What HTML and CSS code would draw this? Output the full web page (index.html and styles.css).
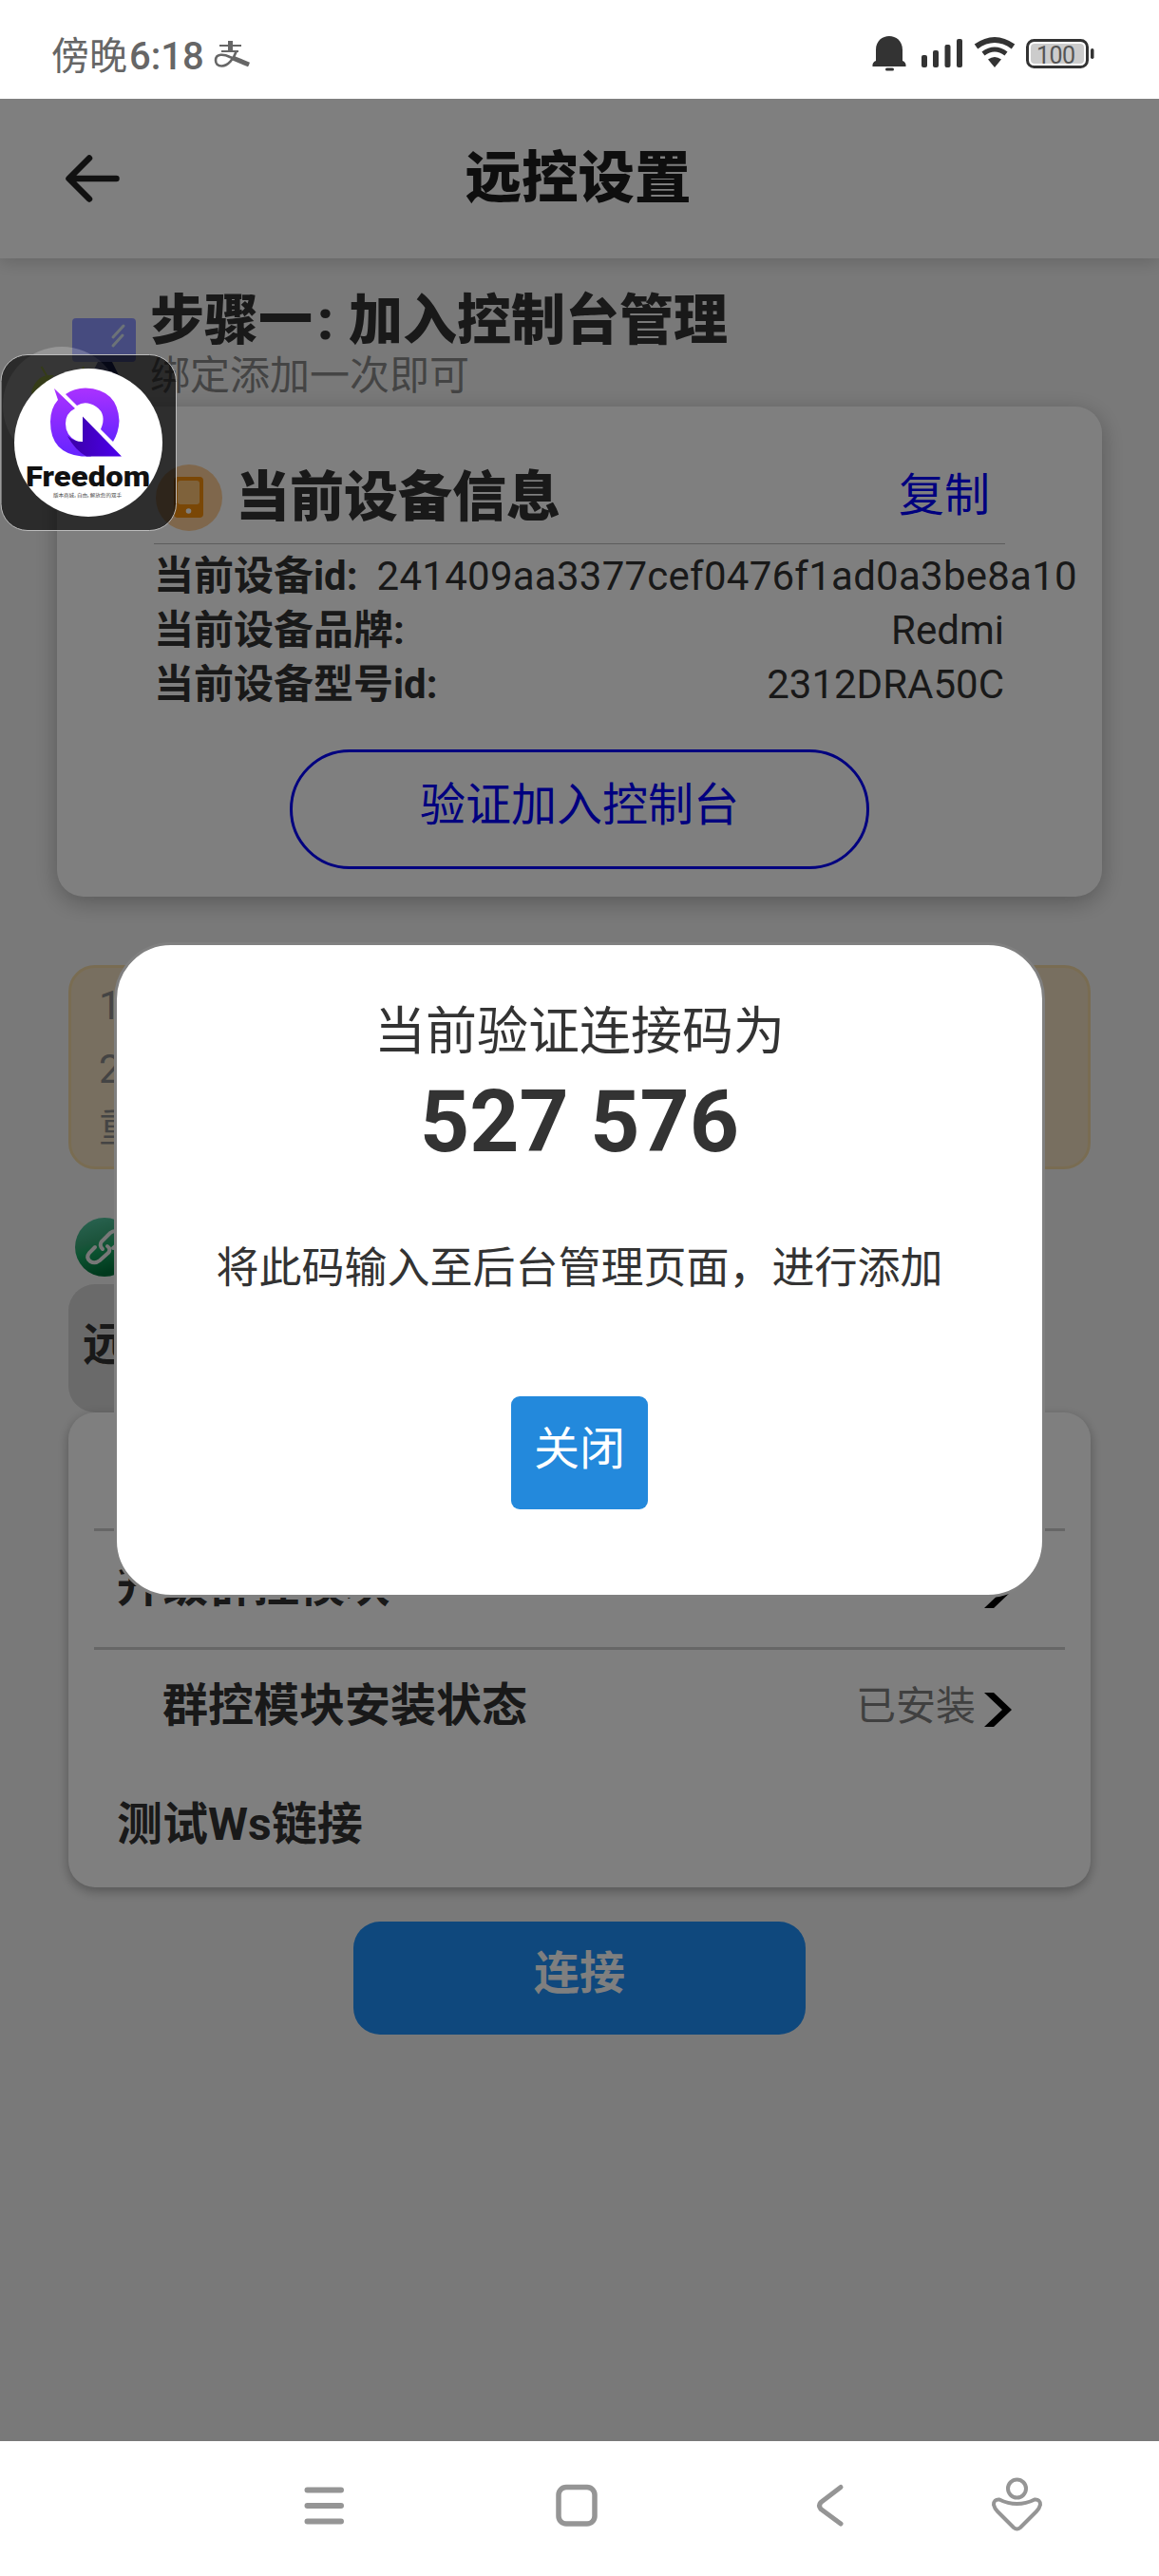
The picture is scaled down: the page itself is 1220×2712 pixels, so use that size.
FILE: index.html
```html
<!DOCTYPE html>
<html lang="zh-CN">
<head>
<meta charset="utf-8">
<title>远控设置</title>
<link rel="stylesheet" href="styles.css">
</head>
<body>
<div class="screen">
  <div class="status">
    <span class="clock">傍晚<b>6:18</b></span>
    <svg class="pay" width="38" height="30" viewBox="0 0 38 30" fill="none" stroke="#666"><path d="M6 6H29M8 12H26" stroke-width="2"/><path d="M17.500 1V12" stroke-width="5"/><path d="M24 11.500C21 20 15 27.500 8.500 27.500C4 27.500 2 25 2 21.500C2 14 11 15 17 18L37 26" stroke-width="2.600"/><path d="M20 19L37 26" stroke-width="5"/></svg>
    <svg class="indicators" width="236" height="40" viewBox="0 0 236 40">
      <g fill="#333"><path d="M4 27V15.500C4 -3.800 32 -3.800 32 15.500V27Q36 28.500 35.500 33H.5Q0 28.500 4 27Z"/><rect x="14" y="34.500" width="9" height="3" rx="1.500"/>
      <rect x="52" y="21" width="6" height="13" rx="2"/><rect x="64" y="16" width="6" height="18" rx="2"/><rect x="76.500" y="10" width="6" height="24" rx="2"/><rect x="89" y="4" width="6" height="30" rx="2"/>
      <path d="M122 25.500Q129 20.500 136 25.500L129 34Z"/></g>
      <path d="M109.500 12Q129 -2 148.500 12" fill="none" stroke="#333" stroke-width="6"/><path d="M117 19.500Q129 10.500 141 19.500" fill="none" stroke="#333" stroke-width="5"/>
      <rect x="163.500" y="5.500" width="63" height="28" rx="7" fill="#fff" stroke="#333" stroke-width="3"/><rect x="167" y="9" width="56" height="21" rx="4" fill="#ccc"/><rect x="230" y="14" width="3.500" height="11" rx="1.700" fill="#333"/>
      <text x="193.500" y="29.500" text-anchor="middle" class="battery" textLength="41">100</text>
    </svg>
  </div>
  <div class="app">
    <div class="header">
      <svg class="back" width="58" height="58" viewBox="0 0 58 58" fill="none" stroke="#222" stroke-width="6.500" stroke-linecap="round" stroke-linejoin="round"><path d="M53.500 29H4M25 7.500L3.500 29L25 50.500"/></svg>
      <h1>远控设置</h1>
    </div>
    <div class="step">
      <svg class="monitor" width="67" height="62" viewBox="0 0 67 62"><rect width="67" height="46" rx="4" fill="#8d96ff"/><path d="M27 46H42L49 60H20Z" fill="#26307c"/><path d="M43 20L54 8M43 29L53 18" stroke="#d9e6ef" stroke-width="3" stroke-linecap="round"/></svg>
      <div><h2>步骤一<i>:</i>加入控制台管理</h2><p>绑定添加一次即可</p></div>
    </div>
    <div class="card device">
      <div class="device-head">
        <svg width="70" height="70" viewBox="0 0 70 70"><circle cx="35" cy="35" r="35" fill="#ffcf99"/><rect x="19" y="13" width="31" height="43" rx="4" fill="#f58f0c"/><rect x="23" y="17" width="23" height="25" rx="3" fill="#ffc477"/><circle cx="34.500" cy="49" r="2.800" fill="#fff"/></svg>
        <h3>当前设备信息</h3><a>复制</a>
      </div>
      <div class="info"><b>当前设备id:</b><span class="device-id">241409aa3377cef0476f1ad0a3be8a10</span></div>
      <div class="info"><b>当前设备品牌:</b><span>Redmi</span></div>
      <div class="info"><b>当前设备型号id:</b><span>2312DRA50C</span></div>
      <div class="verify">验证加入控制台</div>
    </div>
    <div class="notice"><p>1</p><p>2</p><p>重</p></div>
    <svg class="link" width="62" height="62" viewBox="0 0 62 62"><defs><linearGradient id="lg" x1="0" y1="0" x2="0.300" y2="1"><stop offset="0" stop-color="#58cba8"/><stop offset="0.450" stop-color="#38a878"/><stop offset="0.600" stop-color="#1aa864"/><stop offset="1" stop-color="#00733a"/></linearGradient></defs><circle cx="31" cy="31" r="31" fill="url(#lg)"/><g fill="none" stroke="#eee" stroke-width="4" stroke-linecap="round"><path d="M21 31L15 37Q11 42 16 46Q21 49 26 45L35 37Q38 33 34 30"/><path d="M40 32L48 25Q52 20 47 16Q42 12 37 16L28 25Q25 29 29 33"/></g></svg>
    <div class="tab">远控</div>
    <div class="card list">
      <div class="row"></div>
      <div class="row line up">升级群控模块<svg width="29" height="36" viewBox="0 0 29 36"><path d="M0 0H10L29 18L10 36H0L19 18Z"/></svg></div>
      <div class="row line inner">群控模块安装状态<span>已安装</span><svg width="29" height="36" viewBox="0 0 29 36"><path d="M0 0H10L29 18L10 36H0L19 18Z"/></svg></div>
      <div class="row last">测试Ws链接</div>
    </div>
    <div class="connect">连接</div>
    <div class="mask">
      <div class="dialog">
        <p class="label">当前验证连接码为</p>
        <p class="code">527 576</p>
        <p class="tip">将此码输入至后台管理页面，进行添加</p>
        <div class="close">关闭</div>
      </div>
    </div>
  </div>
  <div class="nav">
    <svg width="900" height="142" viewBox="250 2570 900 142" fill="none" stroke="#959595" stroke-linecap="round" stroke-linejoin="round">
      <path d="M323.500 2621.500H359M323.500 2638H359M323.500 2654.500H359" stroke-width="6"/>
      <rect x="588" y="2618.500" width="38" height="38.500" rx="8" stroke-width="5.500"/>
      <path d="M885 2618.500L864 2634.500Q861 2638 864 2641.500L885 2657" stroke-width="5"/>
      <circle cx="1070.500" cy="2620" r="9.500" stroke-width="4"/>
      <path d="M1052 2631.500Q1061 2636 1070.500 2636Q1080 2636 1089 2631.500Q1095 2631 1095 2637Q1094 2641 1091 2644L1074 2661Q1070.500 2664 1067 2661L1050 2644Q1047 2641 1046 2637Q1046 2631 1052 2631.500Z" stroke-width="4"/>
    </svg>
  </div>
  <svg class="floating" width="188" height="196" viewBox="0 364 188 196">
    <defs><clipPath id="disc"><circle cx="93" cy="466" r="78"/></clipPath><linearGradient id="q" x1="0" y1="0" x2="0" y2="1"><stop offset="0" stop-color="#ab32ff"/><stop offset="1" stop-color="#6524ff"/></linearGradient><linearGradient id="tail" x1="0" y1="0.500" x2="1" y2="0.500"><stop offset="0" stop-color="#3b00a5"/><stop offset="1" stop-color="#4c00ee"/></linearGradient></defs>
    <circle cx="65" cy="427" r="62" fill="#fff" fill-opacity=".22"/>
    <rect x="1" y="373.500" width="184.500" height="185" rx="28" fill="#000" fill-opacity=".64" stroke="#bcbcbc" stroke-width="1"/>
    <path d="M33 412Q38 397 50 395H57L34 416Z" fill="#353c18"/><path d="M43.500 386L50 397M88 386L86 391" stroke="#353c18" stroke-width="2"/>
    <circle cx="93" cy="466" r="78" fill="#fff"/>
    <path d="M57 409L79 430Q69 435 69 446Q69 458 80 464L96 480.500H86Q53 477 53 444Q53 430 61 421Z" fill="url(#q)"/>
    <path d="M69 415Q78 408.500 90 408.500Q124 410 125.500 443Q125 455 119 465L106 452Q113 436 101 428Q90 421 81 427Z" fill="url(#q)"/>
    <path d="M87 438.500L128 480.500H91Q79 474 71 459Q78 465 87 465Z" fill="url(#tail)"/>
    <g clip-path="url(#disc)"><text x="27" y="512" class="brand" textLength="131" lengthAdjust="spacingAndGlyphs">Freedom</text><text x="56" y="523" class="motto" textLength="72" lengthAdjust="spacingAndGlyphs">版本商城, 自由, 解放您的双手</text></g>
  </svg>
</div>
</body>
</html>
```
FILE: styles.css
```css
* { box-sizing: border-box; }
body, h1, h2, h3, p { margin: 0; }
body { font-family: Roboto, "Noto Sans CJK SC", sans-serif; color: #333; background: #fff; }
svg { display: block; flex: none; }
.screen { position: relative; width: 1220px; height: 2712px; display: flex; flex-direction: column; overflow: hidden; }

.status { height: 104px; display: flex; padding-left: 54px; color: #666; }
.clock { font-size: 40px; line-height: 120px; white-space: nowrap; }
.clock b { font-weight: 500; margin-left: 2px; }
.pay { margin: 42px 0 0 10px; }
.indicators { margin: 37px 66px 0 auto; }
.battery { font: 400 25px Roboto, sans-serif; fill: #555; }

.app { position: relative; height: 2466px; background: #f3f3f3; display: flex; flex-direction: column; overflow: hidden; }
.header { position: relative; height: 168px; background: #fff; display: flex; align-items: center; justify-content: center; box-shadow: 0 3px 18px rgba(0,0,0,.18); }
.back { position: absolute; left: 69px; top: 55px; }
h1 { font-size: 59.5px; line-height: 80px; font-weight: 900; color: #1c1c1c; margin-right: 3px; }

.step { display: flex; padding: 36px 0 0 76px; height: 156px; }
.monitor { margin: 27px 15px 0 0; }
h2 { font-size: 57px; line-height: 60px; font-weight: 900; white-space: nowrap; display: flex; }
h2 i { font-style: normal; width: 38px; padding-left: 5px; }
.step p { font-size: 42px; line-height: 56px; color: #888; }

.card { background: #fff; border-radius: 28px; }
.device { height: 516px; margin: 0 60px; padding: 48px 102px 0; box-shadow: 0 6px 24px rgba(0,0,0,.27); }
.device-head { height: 97px; border-bottom: 1px solid #bbb; display: flex; align-items: center; padding: 0 16px 0 2px; margin-bottom: 5px; }
h3 { font-size: 57px; line-height: 96px; font-weight: 900; margin-left: 14px; }
.device-head a { margin: -4px 0 0 auto; font-size: 48px; line-height: 60px; color: #00f; }
.info { height: 57px; display: flex; justify-content: space-between; font-size: 42px; line-height: 57px; white-space: nowrap; }
.info b { font-weight: 700; }
.info span { margin: 0 1px 0 20px; }
.info .device-id { letter-spacing: .25px; }
.verify { width: 610px; height: 126px; margin: 40px auto 0 143px; border: 3px solid #00f; border-radius: 63px; color: #00f; font-size: 48px; line-height: 112px; text-align: center; }

.notice { margin: 72px 72px 0; height: 215px; border: 3px solid #f3d9a4; background: #f1dfc0; border-radius: 28px; padding: 7px 29px 0; font-size: 42px; color: #888; }
.notice p { line-height: 66px; }
.notice p + p { line-height: 68px; }
.notice p:last-child { line-height: 56px; }
.link { margin: 51px 0 8px 79px; }
.tab { width: 800px; height: 135px; margin-left: 72px; padding-left: 15px; background: #d4d4d4; border-radius: 28px; font-size: 48px; font-weight: 700; line-height: 127px; }
.list { height: 500px; margin: 0 72px; padding: 0 27px; box-shadow: 0 4px 12px rgba(0,0,0,.3); font-size: 48px; font-weight: 700; line-height: 60px; }
.row { height: 122px; padding: 0 56px 8px 24px; display: flex; align-items: center; }
.row.line { height: 125px; border-top: 3px solid #ccc; }
.row.up { padding-bottom: 6px; }
.row.inner { height: 128px; padding-left: 72px; }
.row.last { height: 125px; }
.row svg { margin: 9px 0 0 auto; }
.row span { margin-left: auto; font-size: 42px; font-weight: 400; color: #808080; padding-top: 3px; }
.row span + svg { margin-left: 9px; }
.connect { width: 476px; height: 119px; margin: 36px auto 0; border-radius: 28px; background: #1e90fa; color: #fff; font-size: 48px; font-weight: 700; line-height: 110px; text-align: center; }

.mask { position: absolute; inset: 0; background: rgba(0,0,0,.5); }
.dialog { width: 980px; height: 690px; margin: 888px auto 0; border: 3px solid #808080; border-radius: 60px; background: #fff; display: flex; flex-direction: column; align-items: center; padding-top: 51px; }
.label { font-size: 54px; line-height: 82px; }
.code { font-size: 91px; font-weight: 700; line-height: 106px; }
.tip { font-size: 45px; line-height: 60px; margin-top: 72px; }
.close { width: 144px; height: 119px; margin-top: 104px; border-radius: 9px; background: #2389dc; color: #fff; font-size: 48px; line-height: 111px; text-align: center; }

.nav { height: 142px; padding-left: 250px; }
.floating { position: absolute; left: 0; top: 364px; }
.brand { font: 900 29px Roboto, sans-serif; fill: #111; }
.motto { font: 400 5px "Noto Sans CJK SC", sans-serif; fill: #444; }
```
